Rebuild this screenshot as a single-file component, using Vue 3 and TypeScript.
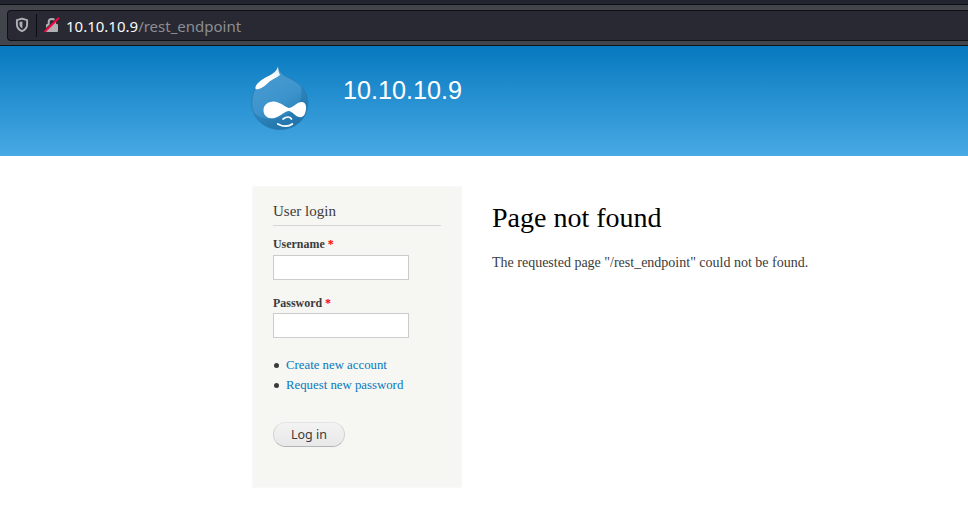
<script setup lang="ts">
import { ref } from 'vue'

const host = '10.10.10.9'
const path = '/rest_endpoint'
const username = ref('')
const password = ref('')
const links: string[] = ['Create new account', 'Request new password']
</script>

<template>
  <div class="window">
    <div class="toolbar">
      <div class="urlbar">
        <svg class="shield" width="14" height="16" viewBox="0 0 14 16">
          <path d="M7 1.6 L12.1 3.1 V7.2 C12.1 10.6 10 12.9 7 14.2 C4 12.9 1.9 10.6 1.9 7.2 V3.1 Z" fill="none" stroke="#b1b1b5" stroke-width="1.9" stroke-linejoin="round" />
          <path d="M7.4 4.6 V11.4 C5.4 10.4 4.5 9 4.5 7.2 V5.1 Z" fill="#b1b1b5" />
        </svg>
        <span class="divider"></span>
        <svg class="lock" width="16" height="16" viewBox="0 0 16 16">
          <path d="M4.7 8 V4.8 C4.7 0.9 11.1 0.9 11.1 4.8 V8" fill="none" stroke="#b1b1b5" stroke-width="2" />
          <rect x="2" y="7" width="12" height="8" rx="1" fill="#b1b1b5" />
          <path d="M0.4 13.6 L13.4 0.8" stroke="#282933" stroke-width="1.5" />
          <path d="M1.2 14.3 L14.2 1.4" stroke="#f20b43" stroke-width="2.1" stroke-linecap="round" />
        </svg>
        <span class="address"><span class="host">{{ host }}</span>{{ path }}</span>
      </div>
    </div>

    <header class="header">
      <svg class="logo" width="60" height="68" viewBox="0 0 60 68">
        <defs>
          <linearGradient id="drop" x1="0.2" y1="0" x2="0.7" y2="1">
            <stop offset="0" stop-color="#489cd1" />
            <stop offset="0.55" stop-color="#3d94cc" />
            <stop offset="1" stop-color="#2276ad" />
          </linearGradient>
          <linearGradient id="shine" x1="1" y1="0" x2="0" y2="1">
            <stop offset="0" stop-color="#d8ecf8" />
            <stop offset="0.4" stop-color="#ffffff" />
            <stop offset="1" stop-color="#ffffff" />
          </linearGradient>
          <clipPath id="dropclip">
            <path d="M28 2 C28.5 7 32 10.5 38 13.5 C50 18.5 57.8 27 57.8 39 C57.8 54 46 65.5 30 65.5 C14 65.5 1.8 54 1.8 39 C1.8 28 7 19 16.5 13 C23 9.5 26.5 7.5 28 2 Z" />
          </clipPath>
        </defs>
        <path d="M28 2 C28.5 7 32 10.5 38 13.5 C50 18.5 57.8 27 57.8 39 C57.8 54 46 65.5 30 65.5 C14 65.5 1.8 54 1.8 39 C1.8 28 7 19 16.5 13 C23 9.5 26.5 7.5 28 2 Z" fill="url(#drop)" />
        <g clip-path="url(#dropclip)">
          <path d="M51 22 C54 36 46 50 28 54 C17 57 8 54 2 47 C7 62 19 67 32 66 C49 65 59 54 59 38 C59 30 56 24 51 22 Z" fill="#1d70a7" opacity="0.45" />
        </g>
        <path d="M28 2 C28.5 7 32 10.5 38 13.5 C50 18.5 57.8 27 57.8 39 C57.8 54 46 65.5 30 65.5 C14 65.5 1.8 54 1.8 39 C1.8 28 7 19 16.5 13 C23 9.5 26.5 7.5 28 2 Z" fill="none" stroke="#2879ae" stroke-width="0.7" />
        <path d="M28 2.5 C28.2 6 29 9 30 11 C27 14 23 14.5 19.5 17.5 C15 22 9.5 26.5 5.5 25 C4.5 20.5 11 16 17.5 12.5 C23.5 9.5 26.5 7.5 28 2.5 Z" fill="url(#shine)" />
        <path d="M23.5 37.5 C29 37.5 33 41.5 38.5 44 C43.5 43.5 47.5 37.5 52.3 38 C56.5 38.5 57 44.5 55 49.5 C53 54.5 48.5 54 44.5 50.5 C41 47.5 39.5 46 36.5 47.5 C31.5 50 27 54.8 21 54.3 C16 53.7 13.4 50.5 13.5 46 C13.6 41 18 37.5 23.5 37.5 Z" fill="#fff" />
        <path d="M33 55 C36.5 52.3 40 52.3 41.5 55" fill="none" stroke="#fff" stroke-width="1.7" stroke-linecap="round" />
        <path d="M27.8 60 C33 62.8 38.8 62.8 42.3 60" fill="none" stroke="#fff" stroke-width="1.9" stroke-linecap="round" />
      </svg>
      <div class="site-name">{{ host }}</div>
    </header>

    <main class="page">
      <aside class="sidebar">
        <h2>User login</h2>
        <form @submit.prevent>
          <label for="name">Username <span class="required">*</span></label>
          <input id="name" v-model="username" type="text" />
          <label for="pass" class="second">Password <span class="required">*</span></label>
          <input id="pass" v-model="password" type="password" />
          <ul>
            <li v-for="link in links" :key="link"><a href="#">{{ link }}</a></li>
          </ul>
          <button type="submit">Log in</button>
        </form>
      </aside>
      <section class="content">
        <h1>Page not found</h1>
        <p>The requested page "{{ path }}" could not be found.</p>
      </section>
    </main>
  </div>
</template>

<style>
body {
  background: #fff;
}
</style>

<style scoped>
.window {
  height: 526px;
  overflow: hidden;
  font-family: "Liberation Serif", serif;
  color: #3b3b3b;
}
.toolbar {
  box-sizing: border-box;
  height: 46px;
  padding: 5px 0 4px 7px;
  background: linear-gradient(#22242e 0 4px, #0d0e11 4px 5px, #42454c 5px 45px, #101216 45px);
}
.urlbar {
  box-sizing: border-box;
  height: 31px;
  margin-top: 5px;
  display: flex;
  align-items: center;
  border: 1px solid #0f1014;
  border-right: 0;
  border-radius: 4px 0 0 4px;
  background: #282933;
  padding-left: 7px;
}
.shield,
.lock {
  display: block;
  margin-top: -1px;
}
.divider {
  width: 1px;
  height: 23px;
  margin: 0 7px;
  background: #0b0c10;
}
.address {
  margin: 0 0 0 6px;
  font: 15px/20px "Noto Sans", sans-serif;
  color: #8d8e93;
}
.host {
  color: #f9f9fa;
}
.header {
  box-sizing: border-box;
  height: 110px;
  padding: 18px 0 0 250px;
  display: flex;
  align-items: flex-start;
  background: linear-gradient(#0779bf, #48a9e4);
}
.logo {
  flex: none;
}
.site-name {
  margin: 11px 0 0 33px;
  font: 25.2px/30px "Liberation Sans", sans-serif;
  color: #fff;
}
.page {
  display: flex;
  align-items: flex-start;
  padding: 30px 0 0 252px;
}
.sidebar {
  box-sizing: border-box;
  width: 210px;
  height: 302px;
  padding: 15px 20px;
  border: 1px solid #f9f9f9;
  background: #f6f6f2;
}
h2 {
  margin: 0 0 11px;
  height: 23px;
  border-bottom: 1px solid #d6d6d6;
  font-size: 15px;
  line-height: 19px;
  font-weight: normal;
}
label {
  display: block;
  font-size: 11.95px;
  line-height: 15px;
  font-weight: bold;
}
.second {
  margin-top: 16px;
}
.required {
  color: #f00;
}
input {
  display: block;
  box-sizing: border-box;
  width: 136px;
  height: 25px;
  margin: 3px 0 0;
  padding: 2px;
  border: 1px solid #ccc;
  background: #fff;
}
.second + input {
  margin-top: 2px;
}
ul {
  margin: 17px 0 27px;
  padding: 0;
  list-style: none;
  font-size: 12.8px;
  line-height: 20px;
}
li {
  display: flex;
  align-items: center;
  gap: 7px;
}
li::before {
  content: "";
  width: 5px;
  height: 5px;
  margin-left: 1px;
  border-radius: 50%;
  background: #3b3b3b;
}
a {
  color: #0779bf;
  text-decoration: none;
}
button {
  display: block;
  box-sizing: border-box;
  width: 72px;
  height: 25px;
  padding: 0;
  border: 1px solid #e4e4e4;
  border-bottom-color: #b4b4b4;
  border-left-color: #d2d2d2;
  border-right-color: #d2d2d2;
  border-radius: 13px;
  background: linear-gradient(#f3f3f3, #e8e8e8);
  color: #3a3a3a;
  font: 12.5px/22px "Noto Sans", sans-serif;
}
.content {
  margin-left: 30px;
}
h1 {
  margin: 14px 0 0;
  font-size: 28px;
  line-height: 36px;
  font-weight: normal;
  color: #000;
}
p {
  margin: 16px 0 0;
  font-size: 14px;
  line-height: 21px;
}
</style>
